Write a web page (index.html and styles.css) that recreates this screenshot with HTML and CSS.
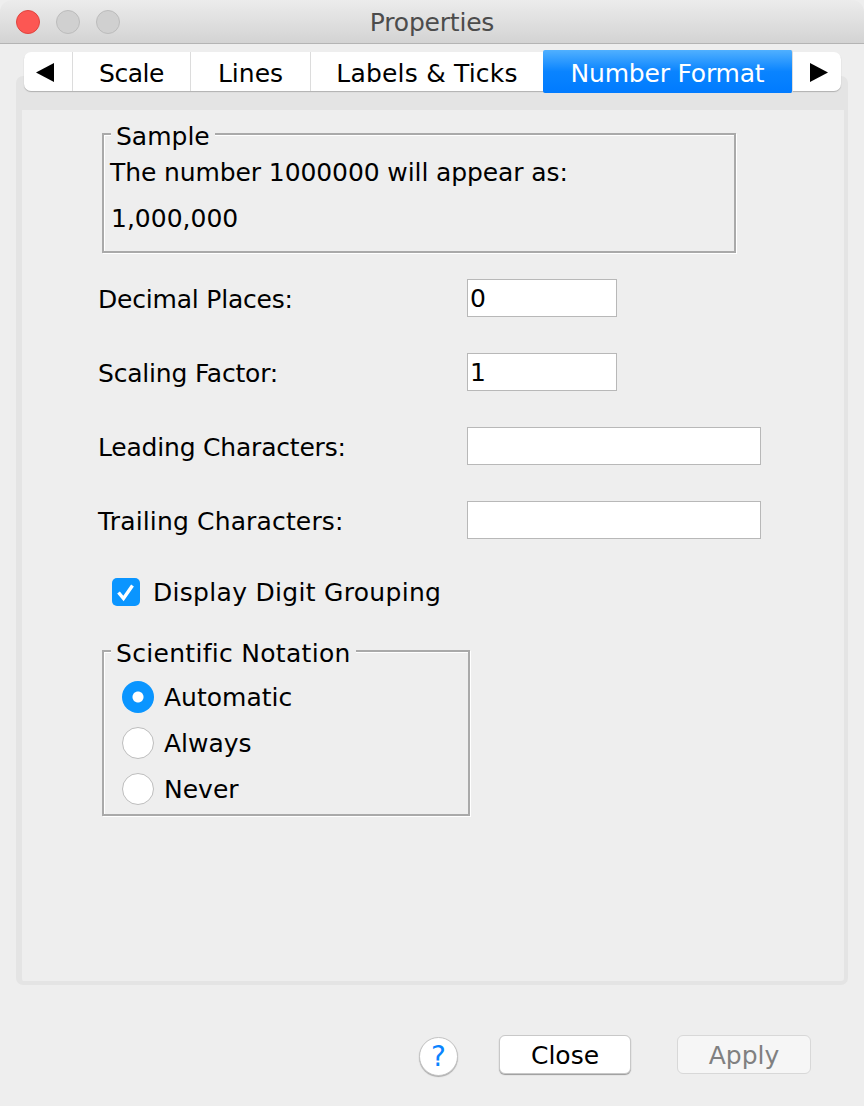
FILE: index.html
```html
<!DOCTYPE html>
<html lang="en">
<head>
    <meta charset="UTF-8">
    <title>Properties</title>
    <link rel="stylesheet" href="styles.css">
</head>
<body>
    <div class="window">
        <div class="titlebar">
            <div class="lights">
                <span class="light light-close"></span>
                <span class="light"></span>
                <span class="light"></span>
            </div>
            <div class="title">Properties</div>
        </div>
        <div class="tabs">
            <div class="tab tab-arrow tab-prev"><svg width="18" height="19" viewBox="0 0 18 19"><path d="M0 9.5 L18 0 V19 Z" fill="#000"/></svg></div>
            <div class="tab tab-scale">Scale</div>
            <div class="tab tab-lines">Lines</div>
            <div class="tab tab-labels">Labels &amp; Ticks</div>
            <div class="tab tab-active">Number Format</div>
            <div class="tab tab-arrow tab-next"><svg width="18" height="19" viewBox="0 0 18 19"><path d="M18 9.5 L0 0 V19 Z" fill="#000"/></svg></div>
        </div>
        <div class="panel">
            <fieldset class="group group-sample">
                <legend>Sample</legend>
                <div class="sample-line">The number 1000000 will appear as:</div>
                <div class="sample-value">1,000,000</div>
            </fieldset>
            <div class="fields">
                <div class="field">
                    <label>Decimal Places:</label>
                    <div class="input input-short">0</div>
                </div>
                <div class="field">
                    <label>Scaling Factor:</label>
                    <div class="input input-short">1</div>
                </div>
                <div class="field">
                    <label>Leading Characters:</label>
                    <div class="input input-long"></div>
                </div>
                <div class="field">
                    <label class="label-wide">Trailing Characters:</label>
                    <div class="input input-long"></div>
                </div>
            </div>
            <div class="check-row">
                <span class="checkbox"><svg class="check-mark" width="28" height="28" viewBox="0 0 28 28"><path d="M6.5 14.5 L11.5 20.5 L20.5 7.5" fill="none" stroke="#fff" stroke-width="3.4"/></svg></span>
                <span class="check-label">Display Digit Grouping</span>
            </div>
            <fieldset class="group group-notation">
                <legend>Scientific Notation</legend>
                <div class="radio-row"><span class="radio radio-on"></span>Automatic</div>
                <div class="radio-row"><span class="radio"></span>Always</div>
                <div class="radio-row"><span class="radio"></span>Never</div>
            </fieldset>
        </div>
        <div class="footer">
            <div class="help">?</div>
            <button class="btn btn-close">Close</button>
            <button class="btn btn-apply">Apply</button>
        </div>
    </div>
</body>
</html>
```

FILE: styles.css
```css
* {
    box-sizing: border-box;
}
html, body {
    margin: 0;
    height: 100%;
    background: #eeeeee;
}
body {
    font-family: "DejaVu Sans", sans-serif;
    font-size: 25px;
    color: #000;
}
.window {
    width: 864px;
    height: 1106px;
    background: #eeeeee;
    overflow: hidden;
}
.titlebar {
    display: flex;
    align-items: center;
    height: 44px;
    padding-left: 16px;
    background: linear-gradient(#ececec, #d3d3d3);
    border-bottom: 1px solid #b4b4b4;
    border-radius: 12px 12px 0 0;
    position: relative;
}
.lights {
    display: flex;
    gap: 16px;
}
.light {
    width: 24px;
    height: 24px;
    border-radius: 50%;
    background: #d0d0d0;
    border: 1px solid #bcbcbc;
}
.light-close {
    background: #fc5753;
    border-color: #e0443e;
}
.title {
    position: absolute;
    left: 0;
    right: 0;
    padding-top: 1px;
    text-align: center;
    font-size: 25px;
    letter-spacing: -0.2px;
    color: #4c4c4c;
}
.tabs {
    display: flex;
    position: relative;
    height: 39px;
    margin: 8px 23px 0 24px;
    background: #fff;
    border-radius: 7px;
    box-shadow: 0 1px 1px #b0b0b0;
}
.tab {
    display: flex;
    align-items: center;
    justify-content: center;
    height: 39px;
    padding-top: 3px;
    border-right: 1px solid #dcdcdc;
}
.tab-arrow {
    padding-top: 2px;
}
.tab-prev {
    width: 49px;
    padding-right: 6px;
}
.tab-scale {
    width: 118px;
    letter-spacing: -0.5px;
}
.tab-lines {
    width: 120px;
}
.tab-labels {
    width: 232px;
    letter-spacing: 0.2px;
    border-right: 0;
}
.tab-active {
    width: 250px;
    height: 43px;
    margin-top: -2px;
    letter-spacing: -0.2px;
    color: #fff;
    background: linear-gradient(#50b0ff, #0a84ff 50%, #007bff);
    border-radius: 2px;
}
.tab-next {
    flex: 1;
    padding-left: 4px;
    border-right: 0;
}
.panel {
    height: 909px;
    margin: -15px 16px 0;
    padding: 14px 0 0 80px;
    background: #eeeeee;
    border: 6px solid #e4e4e4;
    border-top-width: 34px;
    border-right-width: 4px;
    border-bottom-width: 4px;
    border-radius: 7px;
}
.group {
    margin: 0;
    padding: 0;
    border: 2px solid #a9a9a9;
    box-shadow: 1px 1px 0 #fff, inset 1px 1px 0 #fff;
}
.group legend {
    margin-left: 7px;
    padding: 6px 5px 0;
    line-height: 14px;
    background: #eeeeee;
}
.group-sample {
    width: 634px;
    height: 129px;
    padding-left: 6px;
}
.group-sample legend {
    margin-left: 1px;
}
.sample-line {
    margin-top: 14px;
    line-height: 30px;
    letter-spacing: -0.1px;
}
.sample-value {
    margin: 16px 0 0 1px;
    line-height: 30px;
}
.fields {
    display: flex;
    flex-direction: column;
    gap: 36px;
    margin-top: 26px;
}
.field {
    display: flex;
    align-items: center;
    height: 38px;
    margin-left: -4px;
}
.field label {
    width: 369px;
    padding-top: 2px;
    letter-spacing: -0.2px;
}
.field .label-wide {
    letter-spacing: 0.15px;
}
.input {
    height: 38px;
    padding-left: 2px;
    line-height: 38px;
    background: #fff;
    border: 1px solid #b8b8b8;
}
.input-short {
    width: 150px;
}
.input-long {
    width: 294px;
}
.check-row {
    display: flex;
    align-items: center;
    gap: 13px;
    height: 28px;
    margin: 39px 0 0 10px;
}
.checkbox {
    width: 28px;
    height: 28px;
    background: #0a95ff;
    border-radius: 5px;
}
.check-mark {
    display: block;
}
.check-label {
    letter-spacing: 0.3px;
}
.group-notation {
    width: 368px;
    height: 175px;
    margin-top: 35px;
    padding-left: 18px;
}
.group-notation legend {
    margin-left: -11px;
    letter-spacing: 0.3px;
}
.radio-row {
    display: flex;
    align-items: center;
    gap: 10px;
    height: 32px;
    margin-bottom: 14px;
}
.radio-row:first-of-type {
    margin-top: 20px;
}
.radio {
    width: 32px;
    height: 32px;
    background: #fff;
    border: 1px solid #bdbdbd;
    border-radius: 50%;
}
.radio-on {
    background: radial-gradient(circle, #fff 0 5px, #0a95ff 6px);
    border: 0;
}
.footer {
    display: flex;
    align-items: flex-start;
    padding: 50px 0 0 419px;
}
.help {
    width: 39px;
    height: 39px;
    margin-top: 2px;
    color: #0a84ff;
    font-size: 28px;
    line-height: 38px;
    text-align: center;
    background: #fff;
    border: 1px solid #c4c4c4;
    border-radius: 50%;
    box-shadow: 0 1px 1px #aaa;
}
.btn {
    height: 39px;
    padding: 2px 0 0;
    font: inherit;
    background: #fff;
    border: 1px solid #c8c8c8;
    border-radius: 6px;
}
.btn-close {
    width: 132px;
    margin-left: 41px;
    color: #000;
    box-shadow: 0 1px 1px #999;
}
.btn-apply {
    width: 134px;
    margin-left: 46px;
    color: #808080;
    background: #f6f6f6;
    border-color: #d8d8d8;
}
```
